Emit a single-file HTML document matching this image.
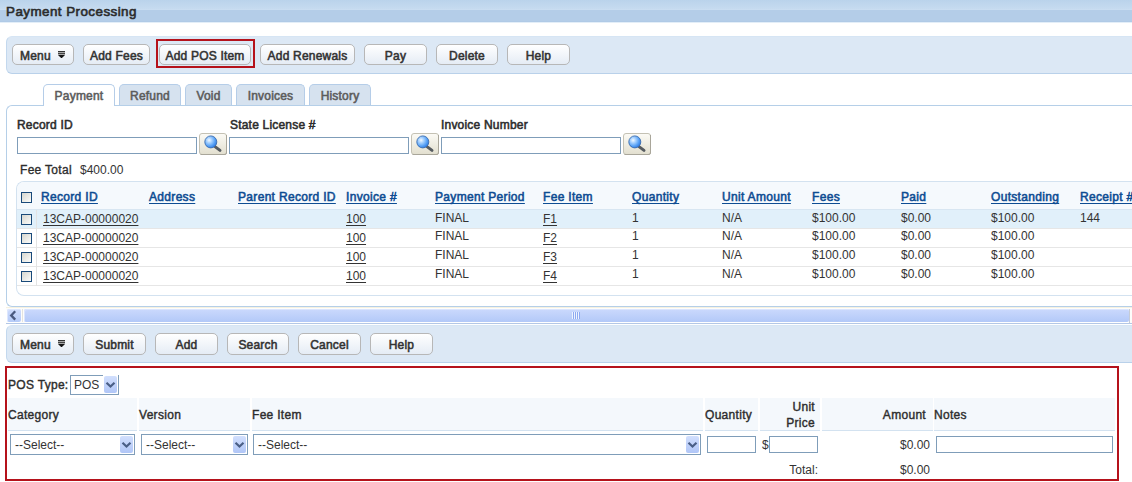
<!DOCTYPE html>
<html><head><meta charset="utf-8">
<style>
*{box-sizing:border-box;margin:0;padding:0}
html,body{width:1132px;height:482px;overflow:hidden;background:#fff;font-family:"Liberation Sans",sans-serif;color:#333;position:relative}
.a{position:absolute}
.hdr{left:0;top:0;width:1132px;height:22px;background:linear-gradient(#bad3eb 0,#c6dbf0 9px,#c9ddf1 9px,#c9ddf1 10px,#b4cde8 10px,#b4cde8 21px,#b0cae6 21px)}
.hdr .t{left:6px;top:4px;font-size:13.4px;font-weight:normal;-webkit-text-stroke:0.6px currentColor;letter-spacing:0.45px;color:#2b2b2b;white-space:nowrap}
.tb{left:6px;width:1140px;background:#dce8f5;border:1px solid #c3d8ee;border-top-color:#d6e5f4;border-bottom-color:#b9d1ea;border-right:none;border-radius:6px 0 0 6px}
.btn{position:absolute;height:21px;border:1px solid #b7b7b7;border-radius:5px;background:linear-gradient(#ffffff,#e5ecf5);font-size:12px;font-weight:normal;-webkit-text-stroke:0.55px currentColor;letter-spacing:0.2px;color:#333;text-align:center;line-height:19px;padding-top:2px;white-space:nowrap}
.menuic{position:absolute;left:45px;top:6px;width:7px;height:7px}
.btn.m{text-align:left;padding-left:7px}
.tab{position:absolute;top:84px;height:21px;border:1px solid #b5cde8;border-bottom:none;border-radius:5px 5px 0 0;background:#d6e2ef;font-size:12px;font-weight:normal;-webkit-text-stroke:0.55px currentColor;letter-spacing:0.2px;color:#5c5c5c;text-align:center;line-height:21px;padding-top:1px}
.tab.on{background:#fff;height:22px;z-index:2}
.panel{left:6px;top:105px;width:1140px;height:202px;border:1px solid #b5cfe8;border-right:none;border-radius:6px 0 0 6px}
.lbl{position:absolute;font-size:12px;font-weight:normal;-webkit-text-stroke:0.55px currentColor;letter-spacing:0.2px;color:#2d2d2d;white-space:nowrap}
.inp{position:absolute;height:17px;border:1px solid #7f9db9;background:#fff}
.srch{position:absolute;width:28px;height:22px}
.grid{left:16px;top:181px;width:1130px;height:115px;border:1px solid #d3e2f0;border-right:none;border-radius:8px 0 0 8px;overflow:hidden}
.gh{position:absolute;left:0;top:0;width:100%;height:28px;background:#f5f9fd;border-bottom:1px solid #d8e6f2}
.hl{position:absolute;top:8px;margin-left:-1px;text-underline-offset:2px;font-size:12px;font-weight:normal;-webkit-text-stroke:0.55px currentColor;letter-spacing:0.32px;color:#0e4c92;text-decoration:underline;white-space:nowrap}
.row{position:absolute;left:0;width:100%;height:19px;border-bottom:1px solid #e6e6e6}
.cell{position:absolute;top:0px;margin-left:-1px;font-size:12px;color:#333;white-space:nowrap}
.r1 .cell{top:1px}
.lk{text-decoration:underline;text-underline-offset:1.5px}
.cb{position:absolute;left:4px;width:11px;height:11px;border:1px solid #1a4a7a;background:linear-gradient(135deg,#d6d6cf,#fcfcfa)}
.sel{position:absolute;height:21px;border:1px solid #7f9db9;background:#fff;font-size:12px;color:#333;line-height:21px;padding-left:4px;white-space:nowrap}
.dd{position:absolute;right:1px;top:1px;width:13px;height:17px;border-radius:2px;background:linear-gradient(#d2dffd,#b0c6f7)}
.pl{-webkit-text-stroke:0.4px currentColor !important;letter-spacing:0.3px !important}
.pos-h{position:absolute;top:398px;height:33px;background:#f4f8fc;border-bottom:1px solid #d3e2f0}
</style></head><body>
<svg width="0" height="0" style="position:absolute"><defs>
<linearGradient id="sbg" x1="0" y1="0" x2="0" y2="1"><stop offset="0" stop-color="#fcfbf6"/><stop offset="1" stop-color="#e2dfcf"/></linearGradient>
<radialGradient id="lens" cx="0.36" cy="0.36" r="0.68"><stop offset="0" stop-color="#f2f9ff"/><stop offset="0.3" stop-color="#acd4ff"/><stop offset="0.7" stop-color="#5aa3f6"/><stop offset="1" stop-color="#2f7be2"/></radialGradient>
</defs></svg>

<div class="a hdr"><div class="a t">Payment Processing</div></div>
<div class="a" style="left:0;top:22px;width:1132px;height:1px;background:#e3eef8"></div>

<!-- toolbar 1 -->
<div class="a tb" style="top:36px;height:38px"></div>
<div class="btn m" style="left:12px;top:44px;width:62px">Menu<svg class="menuic" viewBox="0 0 7 7"><rect x="0" y="0" width="7" height="1" fill="#333"/><rect x="0" y="1" width="7" height="1" fill="#a8a8a8"/><rect x="0" y="2" width="7" height="1" fill="#444"/><rect x="0" y="3" width="7" height="1" fill="#a8a8a8"/><polygon points="0,4 7,4 3.5,7.4" fill="#151515"/></svg></div>
<div class="btn" style="left:83px;top:44px;width:67px">Add Fees</div>
<div class="a" style="left:156px;top:39px;width:99px;height:29px;border:2px solid #b5121b"></div>
<div class="btn" style="left:159px;top:44px;width:92px">Add POS Item</div>
<div class="btn" style="left:260px;top:44px;width:95px">Add Renewals</div>
<div class="btn" style="left:364px;top:44px;width:63px">Pay</div>
<div class="btn" style="left:436px;top:44px;width:62px">Delete</div>
<div class="btn" style="left:507px;top:44px;width:63px">Help</div>

<!-- tabs & panel -->
<div class="a panel"></div>
<div class="tab on" style="left:43px;width:72px">Payment</div>
<div class="tab" style="left:119px;width:62px">Refund</div>
<div class="tab" style="left:185px;width:47px">Void</div>
<div class="tab" style="left:236px;width:69px">Invoices</div>
<div class="tab" style="left:309px;width:62px">History</div>

<div class="lbl" style="left:17px;top:118px">Record ID</div>
<div class="lbl" style="left:230px;top:118px">State License #</div>
<div class="lbl" style="left:441px;top:118px">Invoice Number</div>
<div class="inp" style="left:17px;top:137px;width:180px"></div>
<div class="inp" style="left:229px;top:137px;width:180px"></div>
<div class="inp" style="left:441px;top:137px;width:180px"></div>
<div class="srch" style="left:199px;top:133px"><svg width="28" height="22" viewBox="0 0 28 22"><rect x="0.5" y="0.5" width="27" height="21" rx="2.5" fill="url(#sbg)" stroke="#c4c1b4"/><path d="M1.5 21.5 H26 Q27.5 21.5 27.5 20 V2" fill="none" stroke="#a9a69a"/><line x1="16" y1="13.6" x2="21" y2="17.4" stroke="#565b60" stroke-width="3" stroke-linecap="round"/><circle cx="11.8" cy="8.9" r="6" fill="url(#lens)" stroke="#3a6cb0" stroke-width="0.9"/></svg></div>
<div class="srch" style="left:411px;top:133px"><svg width="28" height="22" viewBox="0 0 28 22"><rect x="0.5" y="0.5" width="27" height="21" rx="2.5" fill="url(#sbg)" stroke="#c4c1b4"/><path d="M1.5 21.5 H26 Q27.5 21.5 27.5 20 V2" fill="none" stroke="#a9a69a"/><line x1="16" y1="13.6" x2="21" y2="17.4" stroke="#565b60" stroke-width="3" stroke-linecap="round"/><circle cx="11.8" cy="8.9" r="6" fill="url(#lens)" stroke="#3a6cb0" stroke-width="0.9"/></svg></div>
<div class="srch" style="left:623px;top:133px"><svg width="28" height="22" viewBox="0 0 28 22"><rect x="0.5" y="0.5" width="27" height="21" rx="2.5" fill="url(#sbg)" stroke="#c4c1b4"/><path d="M1.5 21.5 H26 Q27.5 21.5 27.5 20 V2" fill="none" stroke="#a9a69a"/><line x1="16" y1="13.6" x2="21" y2="17.4" stroke="#565b60" stroke-width="3" stroke-linecap="round"/><circle cx="11.8" cy="8.9" r="6" fill="url(#lens)" stroke="#3a6cb0" stroke-width="0.9"/></svg></div>

<div class="lbl" style="left:20px;top:163px;-webkit-text-stroke:0.35px currentColor;letter-spacing:0.3px">Fee Total</div>
<div class="a" style="left:80px;top:163px;font-size:12px;color:#333">$400.00</div>

<!-- grid -->
<div class="a grid">
  <div class="gh">
    <div class="cb" style="top:10px"></div>
    <div class="hl" style="left:25px">Record ID</div>
    <div class="hl" style="left:133px">Address</div>
    <div class="hl" style="left:222px">Parent Record ID</div>
    <div class="hl" style="left:330px">Invoice #</div>
    <div class="hl" style="left:419px">Payment Period</div>
    <div class="hl" style="left:527px">Fee Item</div>
    <div class="hl" style="left:616px">Quantity</div>
    <div class="hl" style="left:706px">Unit Amount</div>
    <div class="hl" style="left:796px">Fees</div>
    <div class="hl" style="left:885px">Paid</div>
    <div class="hl" style="left:975px">Outstanding</div>
    <div class="hl" style="left:1064px">Receipt #</div>
  </div>
  <div class="row r1" style="top:28px;background:#e1f0fa">
    <div class="cb" style="top:4px"></div>
    <div class="cell lk" style="left:27px;top:1.5px">13CAP-00000020</div>
    <div class="cell lk" style="left:330px;top:2px">100</div>
    <div class="cell" style="left:419px">FINAL</div>
    <div class="cell lk" style="left:527px;top:2px">F1</div>
    <div class="cell" style="left:616px">1</div>
    <div class="cell" style="left:706px">N/A</div>
    <div class="cell" style="left:796px">$100.00</div>
    <div class="cell" style="left:885px">$0.00</div>
    <div class="cell" style="left:975px">$100.00</div>
    <div class="cell" style="left:1064px">144</div>
  </div>
  <div class="row" style="top:47px">
    <div class="cb" style="top:4px"></div>
    <div class="cell lk" style="left:27px;top:1.5px">13CAP-00000020</div>
    <div class="cell lk" style="left:330px;top:2px">100</div>
    <div class="cell" style="left:419px">FINAL</div>
    <div class="cell lk" style="left:527px;top:2px">F2</div>
    <div class="cell" style="left:616px">1</div>
    <div class="cell" style="left:706px">N/A</div>
    <div class="cell" style="left:796px">$100.00</div>
    <div class="cell" style="left:885px">$0.00</div>
    <div class="cell" style="left:975px">$100.00</div>
  </div>
  <div class="row" style="top:66px">
    <div class="cb" style="top:4px"></div>
    <div class="cell lk" style="left:27px;top:1.5px">13CAP-00000020</div>
    <div class="cell lk" style="left:330px;top:2px">100</div>
    <div class="cell" style="left:419px">FINAL</div>
    <div class="cell lk" style="left:527px;top:2px">F3</div>
    <div class="cell" style="left:616px">1</div>
    <div class="cell" style="left:706px">N/A</div>
    <div class="cell" style="left:796px">$100.00</div>
    <div class="cell" style="left:885px">$0.00</div>
    <div class="cell" style="left:975px">$100.00</div>
  </div>
  <div class="row" style="top:85px">
    <div class="cb" style="top:4px"></div>
    <div class="cell lk" style="left:27px;top:1.5px">13CAP-00000020</div>
    <div class="cell lk" style="left:330px;top:2px">100</div>
    <div class="cell" style="left:419px">FINAL</div>
    <div class="cell lk" style="left:527px;top:2px">F4</div>
    <div class="cell" style="left:616px">1</div>
    <div class="cell" style="left:706px">N/A</div>
    <div class="cell" style="left:796px">$100.00</div>
    <div class="cell" style="left:885px">$0.00</div>
    <div class="cell" style="left:975px">$100.00</div>
  </div>
  <div class="a" style="left:19px;top:28px;width:1px;height:76px;background:#e3e3e3"></div>
</div>

<!-- scrollbar -->
<div class="a" style="left:6px;top:307px;width:1126px;height:17px;background:linear-gradient(#f6f1e1 0,#f6f1e1 1px,#fdfdfb 1px,#fdfdfb 16px,#b3c7e6 16px)"></div>
<div class="a" style="left:7px;top:309px;width:14px;height:13px;border-radius:2px;background:linear-gradient(#cfdcfd,#b5cbf8);box-shadow:inset 1px 1px 0 #dde7fe,0 1px 0 #fff,-1px 0 0 #fff"><svg width="14" height="13" viewBox="0 0 14 13" style="position:absolute;left:0;top:0"><polyline points="8.2,2.2 4.2,6.4 8.2,10.6" fill="none" stroke="#4a5a80" stroke-width="2.3"/></svg></div>
<div class="a" style="left:22px;top:309px;width:1px;height:13px;background:#e3e3e0"></div>
<div class="a" style="left:24px;top:309px;width:1105px;height:13px;border-radius:2px;background:linear-gradient(#cbd9fd,#b3c9f8);box-shadow:inset 1px 1px 0 #dbe5fe,0 1px 0 #fff,1px 0 0 #fff"></div>
<div class="a" style="left:1129px;top:309px;width:1px;height:14px;background:#c5cbd6"></div>
<svg class="a" style="left:572px;top:312px" width="8" height="7" viewBox="0 0 8 7"><rect x="0" y="0" width="1" height="7" fill="#eef3fe"/><rect x="1" y="0" width="1" height="7" fill="#8eaaf2"/><rect x="2" y="0" width="1" height="7" fill="#eef3fe"/><rect x="3" y="0" width="1" height="7" fill="#8eaaf2"/><rect x="4" y="0" width="1" height="7" fill="#eef3fe"/><rect x="5" y="0" width="1" height="7" fill="#8eaaf2"/><rect x="6" y="0" width="1" height="7" fill="#eef3fe"/><rect x="7" y="0" width="1" height="7" fill="#8eaaf2"/></svg>

<!-- toolbar 2 -->
<div class="a tb" style="top:325px;height:38px"></div>
<div class="btn m" style="left:12px;top:333px;width:62px;height:22px">Menu<svg class="menuic" viewBox="0 0 7 7"><rect x="0" y="0" width="7" height="1" fill="#333"/><rect x="0" y="1" width="7" height="1" fill="#a8a8a8"/><rect x="0" y="2" width="7" height="1" fill="#444"/><rect x="0" y="3" width="7" height="1" fill="#a8a8a8"/><polygon points="0,4 7,4 3.5,7.4" fill="#151515"/></svg></div>
<div class="btn" style="left:83px;top:333px;width:63px;height:22px">Submit</div>
<div class="btn" style="left:155px;top:333px;width:63px;height:22px">Add</div>
<div class="btn" style="left:227px;top:333px;width:62px;height:22px">Search</div>
<div class="btn" style="left:298px;top:333px;width:63px;height:22px">Cancel</div>
<div class="btn" style="left:370px;top:333px;width:63px;height:22px">Help</div>

<!-- POS -->
<div class="a" style="left:103px;top:375px;width:15px;height:1px;background:#fff;z-index:3"></div>
<div class="a" style="left:5px;top:366px;width:1114px;height:115px;border:2px solid #b5121b"></div>
<div class="lbl pl" style="left:8px;top:378px">POS Type:</div>
<div class="sel" style="left:70px;top:375px;width:49px;height:20px;padding-left:3px;line-height:18px">POS<div class="dd" style="top:0;height:17px"><svg width="13" height="17" viewBox="0 0 13 17" style="position:absolute;left:0;top:0"><polyline points="2.5,6.8 6.5,10.6 10.5,6.8" fill="none" stroke="#4a5f86" stroke-width="2.2"/></svg></div></div>

<div class="pos-h" style="left:8px;width:129px"></div>
<div class="pos-h" style="left:139px;width:111px"></div>
<div class="pos-h" style="left:252px;width:451px"></div>
<div class="pos-h" style="left:705px;width:53px"></div>
<div class="pos-h" style="left:760px;width:60px"></div>
<div class="pos-h" style="left:822px;width:111px"></div>
<div class="pos-h" style="left:934px;width:181px"></div>
<div class="lbl pl" style="left:8px;top:408px">Category</div>
<div class="lbl pl" style="left:139px;top:408px">Version</div>
<div class="lbl pl" style="left:252px;top:408px">Fee Item</div>
<div class="lbl pl" style="left:705px;top:408px">Quantity</div>
<div class="lbl pl" style="left:760px;top:399px;width:55px;text-align:right;line-height:16px">Unit<br>Price</div>
<div class="lbl pl" style="left:822px;top:408px;width:104px;text-align:right">Amount</div>
<div class="lbl pl" style="left:934px;top:408px">Notes</div>

<div class="sel" style="left:10px;top:434px;width:125px">--Select--<div class="dd"><svg width="13" height="17" viewBox="0 0 13 17" style="position:absolute;left:0;top:0"><polyline points="2.5,6.8 6.5,10.6 10.5,6.8" fill="none" stroke="#4a5f86" stroke-width="2.2"/></svg></div></div>
<div class="sel" style="left:141px;top:434px;width:107px">--Select--<div class="dd"><svg width="13" height="17" viewBox="0 0 13 17" style="position:absolute;left:0;top:0"><polyline points="2.5,6.8 6.5,10.6 10.5,6.8" fill="none" stroke="#4a5f86" stroke-width="2.2"/></svg></div></div>
<div class="sel" style="left:253px;top:434px;width:448px">--Select--<div class="dd"><svg width="13" height="17" viewBox="0 0 13 17" style="position:absolute;left:0;top:0"><polyline points="2.5,6.8 6.5,10.6 10.5,6.8" fill="none" stroke="#4a5f86" stroke-width="2.2"/></svg></div></div>
<div class="inp" style="left:707px;top:436px;width:49px"></div>
<div class="a" style="left:762px;top:438px;font-size:12px">$</div>
<div class="inp" style="left:769px;top:436px;width:49px"></div>
<div class="a" style="left:822px;top:438px;width:108px;text-align:right;font-size:12px">$0.00</div>
<div class="inp" style="left:936px;top:436px;width:177px"></div>
<div class="a" style="left:760px;top:463px;width:58px;text-align:right;font-size:12px">Total:</div>
<div class="a" style="left:822px;top:463px;width:108px;text-align:right;font-size:12px">$0.00</div>

</body></html>
